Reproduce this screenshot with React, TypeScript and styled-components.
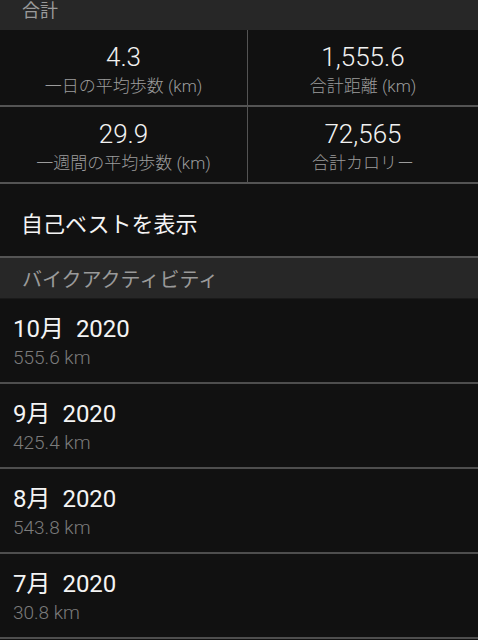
import React from 'react';
import styled, { createGlobalStyle } from 'styled-components';

const GlobalStyle = createGlobalStyle`
  * {
    box-sizing: border-box;
  }
  html, body {
    margin: 0;
    padding: 0;
    background: #111111;
  }
  body {
    font-family: Roboto, 'Noto Sans CJK JP', sans-serif;
    color: #ffffff;
  }
`;

const Page = styled.div`
  width: 478px;
  height: 640px;
  overflow: hidden;
  background: #111111;
`;

const SectionHeader = styled.div<{ height: number }>`
  display: flex;
  align-items: center;
  height: ${({ height }) => height}px;
  padding-left: 22px;
  background: #272727;
  color: #9a9a9a;
  font-size: 20px;
  border-bottom: 1px solid #1a1a1a;
`;

const TopHeader = styled(SectionHeader)`
  align-items: flex-start;
  font-size: 18px;
  line-height: 20px;
  padding-top: 1px;
  border-bottom: none;
`;

const StatGrid = styled.div`
  display: grid;
  grid-template-columns: 247px 1fr;
  grid-auto-rows: 75px;
  row-gap: 2px;
  column-gap: 1px;
  background: #545454;
  border-bottom: 2px solid #545454;
`;

const StatCell = styled.div`
  display: flex;
  flex-direction: column;
  align-items: center;
  padding-top: 12px;
  background: #111111;
`;

const StatValue = styled.div`
  font-size: 26px;
  font-weight: 300;
  line-height: 30px;
  color: #f2f2f2;
`;

const StatLabel = styled.div`
  margin-top: 4px;
  font-size: 17px;
  font-weight: 300;
  line-height: 20px;
  color: #9c9c9c;
`;

const BestRow = styled.div`
  display: flex;
  align-items: center;
  height: 74px;
  padding: 4px 0 0 21px;
  font-size: 22px;
  color: #f4f4f4;
  border-bottom: 2px solid #545454;
`;

const Item = styled.div`
  height: 85px;
  padding: 16px 0 0 13px;
  border-bottom: 2px solid #4e4e4e;
`;

const ItemTitle = styled.div`
  font-size: 24px;
  line-height: 28px;
  color: #f4f4f4;
  white-space: pre;
`;

const ItemSub = styled.div`
  margin-top: 4px;
  font-size: 19px;
  font-weight: 300;
  line-height: 22px;
  color: #7c7c7c;
`;

const stats = [
  { value: '4.3', label: '一日の平均歩数 (km)' },
  { value: '1,555.6', label: '合計距離 (km)' },
  { value: '29.9', label: '一週間の平均歩数 (km)' },
  { value: '72,565', label: '合計カロリー' },
];

const months = [
  { month: '10月', year: '2020', dist: '555.6 km' },
  { month: '9月', year: '2020', dist: '425.4 km' },
  { month: '8月', year: '2020', dist: '543.8 km' },
  { month: '7月', year: '2020', dist: '30.8 km' },
];

export default function App() {
  return (
    <Page>
      <GlobalStyle />
      <TopHeader height={30}>合計</TopHeader>
      <StatGrid>
        {stats.map((s) => (
          <StatCell key={s.label}>
            <StatValue>{s.value}</StatValue>
            <StatLabel>{s.label}</StatLabel>
          </StatCell>
        ))}
      </StatGrid>
      <BestRow>自己ベストを表示</BestRow>
      <SectionHeader height={41}>バイクアクティビティ</SectionHeader>
      {months.map((m) => (
        <Item key={m.month}>
          <ItemTitle>{`${m.month}  ${m.year}`}</ItemTitle>
          <ItemSub>{m.dist}</ItemSub>
        </Item>
      ))}
    </Page>
  );
}
